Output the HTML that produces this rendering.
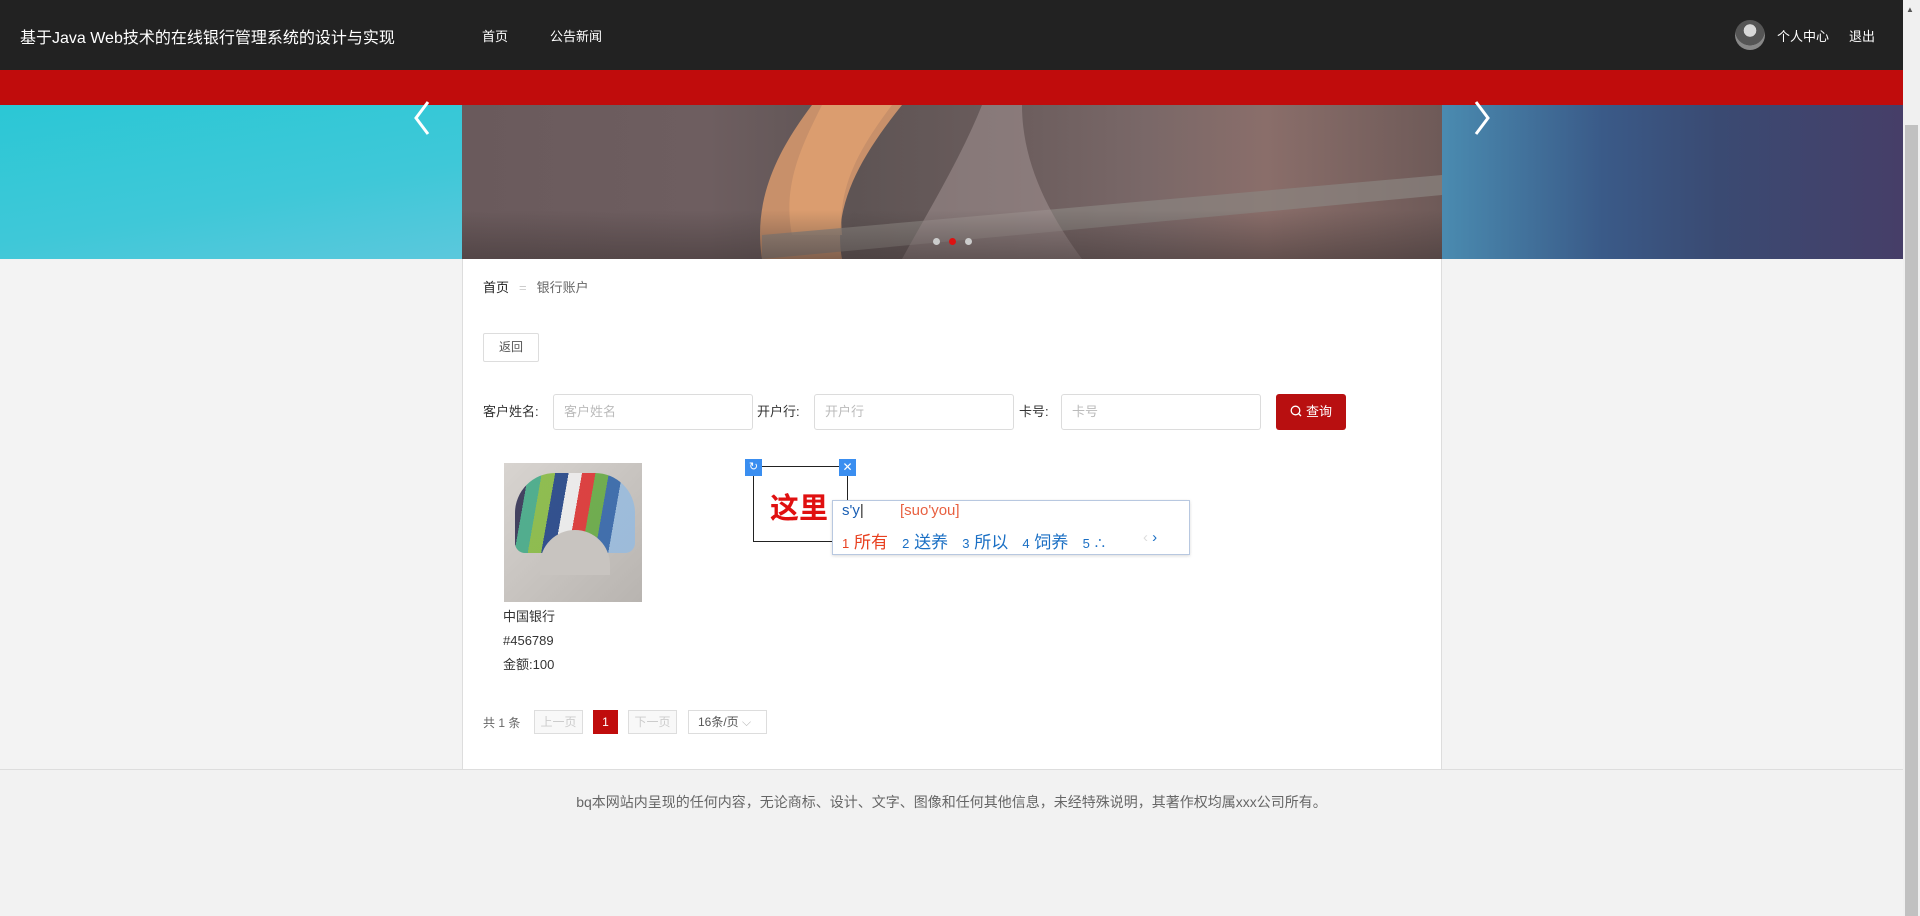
<!DOCTYPE html>
<html><head><meta charset="utf-8"><style>
*{margin:0;padding:0;box-sizing:border-box}
body{width:1920px;height:916px;overflow:hidden;background:#f3f3f3;font-family:"Liberation Sans","Noto Sans CJK SC",sans-serif;position:relative;font-size:14px;color:#333}
.abs{position:absolute}
.hdr{left:0;top:0;width:1903px;height:70px;background:#222}
.red{left:0;top:70px;width:1903px;height:35px;background:#c00c0c}
.wt{color:#fff;white-space:nowrap}
.ban{top:105px;height:154px}
.main{left:462px;top:259px;width:980px;height:510px;background:#fff;border-left:1px solid #ddd;border-right:1px solid #ddd}
.foot{left:0;top:769px;width:1903px;height:147px;background:#f2f2f2;border-top:1px solid #ddd}
.inp{height:36px;border:1px solid #dcdcdc;border-radius:3px;color:#bbb;padding-left:10px;line-height:34px;font-size:13px;background:#fff}
.lbl{font-size:13px;color:#333;line-height:36px}
.pg{height:24px;border:1px solid #ddd;font-size:12px;line-height:22px;text-align:center;color:#ccc;background:#f8f8f8}
</style></head><body>
<div class="abs hdr"></div>
<div class="abs wt" style="left:20px;top:24px;font-size:16px">基于Java Web技术的在线银行管理系统的设计与实现</div>
<div class="abs wt" style="left:482px;top:26px;font-size:13px">首页</div>
<div class="abs wt" style="left:550px;top:26px;font-size:13px">公告新闻</div>
<div class="abs" style="left:1735px;top:20px;width:30px;height:30px;border-radius:50%;background:radial-gradient(circle at 50% 35%,#d8d8d8 0 25%,#555 26% 60%,#888 61%)"></div>
<div class="abs wt" style="left:1777px;top:26px;font-size:13px">个人中心</div>
<div class="abs wt" style="left:1849px;top:26px;font-size:13px">退出</div>
<div class="abs red"></div>
<div class="abs ban" style="left:0;width:462px;background:linear-gradient(170deg,#2bc7d5,#3fc8d8 60%,#5bc8dc)"></div>
<div class="abs ban" style="left:462px;width:980px;background:linear-gradient(90deg,#6a5a5c 0%,#6e5e60 25%,#5e5454 40%,#6a5c5c 55%,#7a6868 70%,#8a6e6a 82%,#6e5a58 100%)"></div>
<svg class="abs" style="left:462px;top:105px" width="980" height="154">
<path d="M350 0 C320 40 290 90 300 154 L380 154 C370 100 400 50 440 0 Z" fill="#c8906a"/>
<path d="M360 0 C340 40 320 80 330 130 L380 130 C375 80 400 40 430 0 Z" fill="#e0a070" opacity=".8"/>
<path d="M300 130 L980 70 L980 90 L300 154 Z" fill="#8a8580" opacity=".7"/>
<path d="M520 0 C500 50 470 100 440 154 L620 154 C580 100 560 50 560 0 Z" fill="#a89898" opacity=".5"/>
</svg>
<div class="abs" style="left:462px;top:210px;width:980px;height:49px;background:linear-gradient(180deg,rgba(60,50,50,0),rgba(60,50,50,.5))"></div>
<div class="abs ban" style="left:1442px;width:461px;background:linear-gradient(90deg,#4a8bb0,#3a5a88 35%,#3a4a72 60%,#463e68)"></div>
<svg class="abs" style="left:410px;top:100px" width="24" height="36"><path d="M18 2 L6 18 L18 34" stroke="#fff" stroke-width="3" fill="none"/></svg>
<svg class="abs" style="left:1470px;top:100px" width="24" height="36"><path d="M6 2 L18 18 L6 34" stroke="#fff" stroke-width="3" fill="none"/></svg>
<div class="abs" style="left:933px;top:238px;width:7px;height:7px;border-radius:50%;background:#ccc"></div>
<div class="abs" style="left:949px;top:238px;width:7px;height:7px;border-radius:50%;background:#d11"></div>
<div class="abs" style="left:965px;top:238px;width:7px;height:7px;border-radius:50%;background:#ccc"></div>
<div class="abs main"></div>
<div class="abs" style="left:483px;top:277px;font-size:13px"><span style="color:#222">首页</span><span style="color:#ccc;margin:0 10px">=</span><span style="color:#666">银行账户</span></div>
<div class="abs" style="left:483px;top:333px;width:56px;height:29px;border:1px solid #ddd;border-radius:2px;font-size:12px;text-align:center;line-height:27px;color:#555">返回</div>
<div class="abs lbl" style="left:483px;top:394px">客户姓名:</div>
<div class="abs inp" style="left:553px;top:394px;width:200px">客户姓名</div>
<div class="abs lbl" style="left:757px;top:394px">开户行:</div>
<div class="abs inp" style="left:814px;top:394px;width:200px">开户行</div>
<div class="abs lbl" style="left:1019px;top:394px">卡号:</div>
<div class="abs inp" style="left:1061px;top:394px;width:200px">卡号</div>
<div class="abs" style="left:1276px;top:394px;width:70px;height:36px;background:#b80f10;border-radius:3px;color:#fff;font-size:13px;line-height:36px;text-align:center"><svg width="12" height="12" style="vertical-align:-1px;margin-right:4px"><circle cx="5.5" cy="5.5" r="4.3" stroke="#fff" stroke-width="1.3" fill="none"/><path d="M8.5 8.5 L11 11" stroke="#fff" stroke-width="1.3"/></svg>查询</div>
<div class="abs" style="left:504px;top:463px;width:138px;height:139px;background:linear-gradient(135deg,#d8d4d0,#b8b4b0);"></div>
<div class="abs" style="left:515px;top:473px;width:120px;height:80px;background:linear-gradient(100deg,#335 0 10%,#4a8 10% 20%,#8b4 20% 30%,#248 30% 40%,#eee 40% 50%,#d33 50% 60%,#6a4 60% 70%,#36a 70% 80%,#9bd 80% 100%);border-radius:40px 40px 10px 10px;opacity:.9"></div>
<div class="abs" style="left:540px;top:530px;width:70px;height:45px;border-radius:35px 35px 0 0;background:#c8c4c0"></div>
<div class="abs" style="left:503px;top:605px;font-size:13px;line-height:24px">中国银行<br>#456789<br>金额:100</div>
<div class="abs" style="left:483px;top:711px;font-size:12px;color:#666;line-height:24px">共 1 条</div>
<div class="abs pg" style="left:534px;top:710px;width:49px">上一页</div>
<div class="abs" style="left:593px;top:710px;width:25px;height:24px;background:#c00c0c;color:#fff;font-size:12px;line-height:24px;text-align:center">1</div>
<div class="abs pg" style="left:628px;top:710px;width:49px">下一页</div>
<div class="abs pg" style="left:688px;top:710px;width:79px;background:#fff;color:#555;text-align:left;padding-left:9px">16条/页 <span style="color:#bbb">⌵</span></div>
<div class="abs" style="left:753px;top:466px;width:95px;height:76px;border:1.5px solid #222"></div>
<div class="abs" style="left:745px;top:459px;width:17px;height:17px;background:#3a8ef0;color:#fff;font-size:11px;text-align:center;line-height:17px">↻</div>
<div class="abs" style="left:839px;top:459px;width:17px;height:17px;background:#3a8ef0;color:#fff;font-size:12px;text-align:center;line-height:17px">✕</div>
<div class="abs" style="left:770px;top:485px;font-size:29px;font-weight:bold;color:#e01010">这里</div>
<div class="abs" style="left:832px;top:500px;width:358px;height:55px;background:#fff;border:1px solid #b8c8e0;box-shadow:0 1px 3px rgba(0,0,0,.15)"></div>
<div class="abs" style="left:842px;top:502px;font-size:15px;color:#1a5fb4">s'y<span style="color:#333">|</span></div>
<div class="abs" style="left:900px;top:502px;font-size:15px;color:#e86040">[suo'you]</div>
<div class="abs" style="left:842px;top:528px;font-size:17px;color:#1a6fc4;white-space:nowrap"><span style="color:#e84020"><small style="font-size:13px">1</small> 所有</span>&nbsp;&nbsp;&nbsp;<small style="font-size:13px">2</small> 送养&nbsp;&nbsp;&nbsp;<small style="font-size:13px">3</small> 所以&nbsp;&nbsp;&nbsp;<small style="font-size:13px">4</small> 饲养&nbsp;&nbsp;&nbsp;<small style="font-size:13px">5 ∴</small></div>
<div class="abs" style="left:1143px;top:529px;font-size:15px;color:#1a6fc4"><span style="color:#ddd">‹</span> ›</div>
<div class="abs foot"></div>
<div class="abs" style="left:0;top:792px;width:1903px;text-align:center;font-size:14px;color:#666">bq本网站内呈现的任何内容，无论商标、设计、文字、图像和任何其他信息，未经特殊说明，其著作权均属xxx公司所有。</div>
<div class="abs" style="left:1903px;top:0;width:17px;height:916px;background:#f0f0f0"></div>
<div class="abs" style="left:1905px;top:125px;width:13px;height:791px;background:#c1c1c1"></div>
<div class="abs" style="left:1906px;top:5px;font-size:8px;color:#555">▲</div>
</body></html>
